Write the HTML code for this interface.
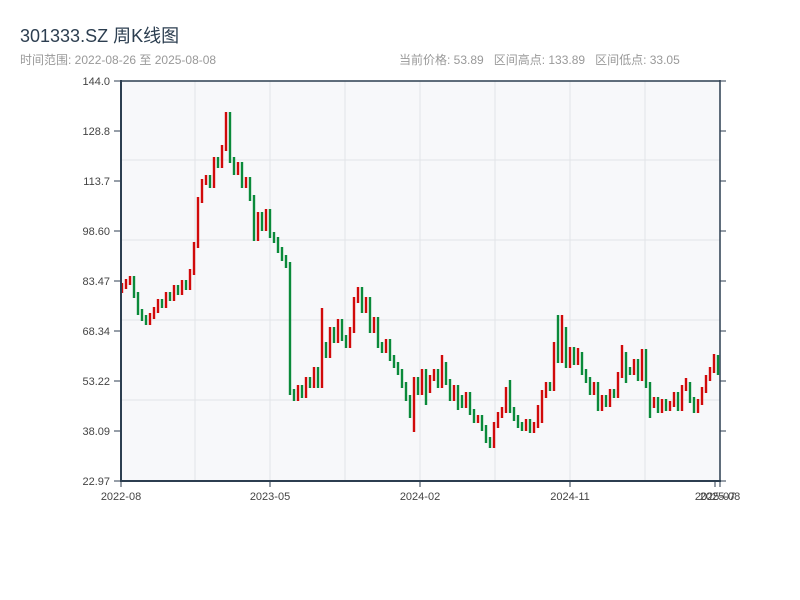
<!DOCTYPE html>
<html><head><meta charset="utf-8">
<style>
body{margin:0;width:800px;height:600px;background:#fff;font-family:"Liberation Sans","Noto Sans CJK SC",sans-serif;overflow:hidden;position:relative}
.t{position:absolute;left:20px;top:22px;font-size:18px;color:#2c3e50}
.s{position:absolute;top:51px;font-size:12px;color:#999}
svg text{font-family:"Liberation Sans",sans-serif;font-size:11px;fill:#444}
</style></head><body>
<div class="t">301333.SZ 周K线图</div>
<div class="s" style="left:20px">时间范围: 2022-08-26 至 2025-08-08</div>
<div class="s" style="left:399px">当前价格: 53.89&nbsp;&nbsp; 区间高点: 133.89&nbsp;&nbsp; 区间低点: 33.05</div>
<svg width="800" height="600" style="position:absolute;left:0;top:0">
<rect x="121" y="81" width="599" height="400" fill="#f7f8fa"/>
<g stroke="#e2e4e8" stroke-width="1">
<path d="M195 81V481M270 81V481M345 81V481M420 81V481M495 81V481M570 81V481M645 81V481M121 160H720M121 240H720M121 320H720M121 400H720"/>
</g>
<path fill="none" stroke="#d10a0a" stroke-width="2.4" d="M122 283V293M126 279V289M130 276V285M150 313V325M154 307V319M158 299V313M166 292V308M174 285V301M182 280V295M190 269V290M194 242V275M198 197V248M202 179V203M206 175V185M214 157V188M222 145V168M226 112V151M238 162V175M246 177V188M258 212V241M266 209V231M298 385V401M306 377V398M314 367V388M322 308V388M330 327V358M338 319V343M350 327V348M354 297V333M358 287V303M366 297V313M374 317V333M386 339V353M414 377V432M422 369V395M430 375V393M434 369V381M442 355V388M454 385V401M466 392V408M478 415V423M494 422V448M498 412V428M502 407V418M506 387V413M526 419V431M534 422V433M538 405V428M542 390V423M546 382V398M554 342V391M562 315V363M570 347V368M578 348V365M594 382V395M602 395V411M610 389V407M618 372V398M622 345V378M634 359V375M642 349V381M654 397V408M662 399V413M670 401V411M674 392V407M682 385V411M686 378V391M698 399V413M702 387V405M706 375V393M710 367V381M714 354V373"/>
<path fill="none" stroke="#0a8a3a" stroke-width="2.4" d="M134 276V298M138 292V315M142 309V321M146 315V325M162 299V308M170 292V301M178 285V295M186 280V290M210 175V188M218 157V168M230 112V163M234 157V175M242 162V188M250 177V201M254 195V241M262 212V231M270 209V238M274 232V243M278 237V253M282 247V261M286 255V268M290 262V395M294 389V401M302 385V398M310 377V388M318 367V388M326 342V358M334 327V343M342 319V341M346 335V348M362 287V313M370 297V333M378 317V348M382 342V353M390 339V361M394 355V368M398 362V375M402 369V388M406 382V401M410 395V418M418 377V395M426 369V405M438 369V388M446 362V385M450 379V401M458 385V410M462 395V408M470 392V415M474 409V423M482 415V431M486 425V443M490 437V448M510 380V413M514 407V421M518 415V428M522 422V431M530 419V433M550 382V391M558 315V363M566 327V368M574 347V365M582 352V375M586 369V383M590 377V395M598 382V411M606 395V407M614 389V398M626 352V383M630 367V375M638 359V381M646 349V388M650 382V418M658 397V413M666 399V411M678 392V411M690 382V403M694 397V413M718 355V375"/>
<g stroke="#2c3e50" fill="none">
<path stroke-width="1.5" d="M121 81H720M720 80V482"/>
<path stroke-width="2" d="M121 80V482M120 481H721"/>
<path stroke-width="1" d="M114 81H121M114 131H121M114 181H121M114 231H121M114 281H121M114 331H121M114 381H121M114 431H121M114 481H121M720 81H726M720 131H726M720 181H726M720 231H726M720 281H726M720 331H726M720 381H726M720 431H726M720 481H726M121 481V487M270 481V487M420 481V487M570 481V487M715 481V487M720 481V487"/>
</g>
<g text-anchor="end">
<text x="110" y="85">144.0</text><text x="110" y="135">128.8</text><text x="110" y="185">113.7</text><text x="110" y="235">98.60</text><text x="110" y="285">83.47</text><text x="110" y="335">68.34</text><text x="110" y="385">53.22</text><text x="110" y="435">38.09</text><text x="110" y="485">22.97</text>
</g>
<g text-anchor="middle">
<text x="121" y="500">2022-08</text><text x="270" y="500">2023-05</text><text x="420" y="500">2024-02</text><text x="570" y="500">2024-11</text><text x="715" y="500">2025-07</text><text x="720" y="500">2025-08</text>
</g>
</svg>
</body></html>
